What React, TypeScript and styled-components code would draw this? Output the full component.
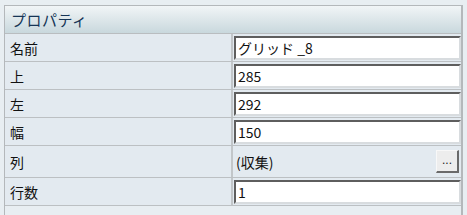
import React from 'react';
import styled, { createGlobalStyle } from 'styled-components';

const GlobalStyle = createGlobalStyle`
  html, body {
    margin: 0;
    padding: 0;
    background: #e8eef2;
    font-family: "Noto Sans CJK JP", "Noto Sans", sans-serif;
  }
`;

const Panel = styled.div`
  margin: 5px 0 0 4px;
  width: 459px;
  height: 210px;
  border-top: 1px solid #b4b8bb;
  border-left: 1px solid #b4b8bb;
  border-right: 2px solid #b4b8bb;
  background: #e8eef2;
  box-sizing: border-box;
`;

const Header = styled.div`
  height: 27px;
  padding-left: 6px;
  display: flex;
  align-items: center;
  background: linear-gradient(to bottom, #f1f5f7 0%, #dfe8eb 45%, #c9d8dd 100%);
  border-bottom: 1px solid #b9bdc0;
  color: #163556;
  font-size: 15px;
  letter-spacing: 0.5px;
`;

const Row = styled.div<{ $tall?: boolean }>`
  display: grid;
  grid-template-columns: 228px 1fr;
  height: ${(p) => (p.$tall ? 31 : 27)}px;
  border-bottom: 1px solid #bcc0c3;
`;

const Label = styled.div`
  display: flex;
  align-items: center;
  padding-left: 5px;
  font-size: 14px;
  color: #111;
  border-right: 2px solid #c2c6c9;
  background: #e3eaf0;
`;

const Value = styled.div`
  display: flex;
  align-items: center;
  padding: 0 0 0 1px;
  background: #e3eaf0;
`;

const Field = styled.div`
  flex: 1;
  height: 24px;
  box-sizing: border-box;
  background: #fff;
  border-top: 2px solid #5e5e5e;
  border-left: 2px solid #5e5e5e;
  border-bottom: 2px solid #d8dcdf;
  border-right: 2px solid #d8dcdf;
  display: flex;
  align-items: center;
  padding-left: 2px;
  font-size: 14px;
  color: #111;
`;

const Static = styled.div`
  flex: 1;
  display: flex;
  align-items: center;
  justify-content: space-between;
  padding-left: 2px;
  padding-right: 2px;
  font-size: 14px;
  color: #111;
`;

const DotsButton = styled.button`
  width: 23px;
  height: 23px;
  padding: 0;
  box-sizing: border-box;
  background: #ededed;
  border-top: 1px solid #f8f8f8;
  border-left: 1px solid #f8f8f8;
  border-bottom: 2px solid #6a6a6a;
  border-right: 2px solid #6a6a6a;
  font-family: "Liberation Sans", sans-serif;
  font-size: 12px;
  line-height: 1;
  color: #222;
  display: flex;
  align-items: flex-end;
  justify-content: center;
  padding-bottom: 5px;
`;

const rows = [
  { label: '名前', value: 'グリッド _8' },
  { label: '上', value: '285' },
  { label: '左', value: '292' },
  { label: '幅', value: '150' },
];

export default function App() {
  return (
    <>
      <GlobalStyle />
      <Panel>
        <Header>プロパティ</Header>
        {rows.map((r) => (
          <Row key={r.label}>
            <Label>{r.label}</Label>
            <Value>
              <Field>{r.value}</Field>
            </Value>
          </Row>
        ))}
        <Row $tall>
          <Label>列</Label>
          <Value>
            <Static>
              (収集)
              <DotsButton>...</DotsButton>
            </Static>
          </Value>
        </Row>
        <Row>
          <Label>行数</Label>
          <Value>
            <Field>1</Field>
          </Value>
        </Row>
      </Panel>
    </>
  );
}
